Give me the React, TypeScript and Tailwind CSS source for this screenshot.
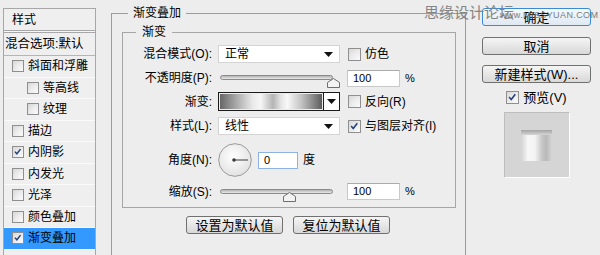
import React from 'react';

const leftItems = [
  { label: '斜面和浮雕', indent: false, checked: false },
  { label: '等高线', indent: true, checked: false },
  { label: '纹理', indent: true, checked: false },
  { label: '描边', indent: false, checked: false },
  { label: '内阴影', indent: false, checked: true },
  { label: '内发光', indent: false, checked: false },
  { label: '光泽', indent: false, checked: false },
  { label: '颜色叠加', indent: false, checked: false },
  { label: '渐变叠加', indent: false, checked: true, selected: true },
];

function Check({ checked, size = 13 }: { checked?: boolean; size?: number }) {
  return (
    <span
      className="relative inline-block shrink-0 border border-[#8f8f8f] bg-gradient-to-br from-[#d8d8d8] to-[#fbfbfb]"
      style={{ width: size, height: size }}
    >
      <span className="absolute inset-[2px] bg-gradient-to-br from-[#e2e2e2] to-[#f7f7f7]" />
      {checked && (
        <svg className="absolute inset-0" viewBox="0 0 13 13" width={size - 2} height={size - 2}>
          <path d="M2.5 6 L5 8.8 L9.8 2.8" fill="none" stroke="#22407e" strokeWidth="1.9" />
        </svg>
      )}
    </span>
  );
}

function Arrow() {
  return (
    <svg width="9" height="5" viewBox="0 0 9 5">
      <path d="M0 0 H9 L4.5 5 Z" fill="#111" />
    </svg>
  );
}

function Select({ value }: { value: string }) {
  return (
    <div className="flex h-[18px] w-[122px] items-center justify-between border border-[#d4d4d4] bg-white pl-[6px] pr-[6px]">
      <span className="text-[12px] leading-none">{value}</span>
      <Arrow />
    </div>
  );
}

function Slider({ pos }: { pos: number }) {
  return (
    <div className="relative h-[18px] w-[122px]">
      <div className="absolute left-[2px] top-[6px] h-[5px] w-[113px] rounded-full border border-[#8a8a8a] bg-gradient-to-b from-[#b4b4b4] to-[#e8e8e8]" />
      <svg className="absolute top-[9px]" style={{ left: pos - 6 }} width="13" height="10" viewBox="0 0 13 10">
        <path d="M0.5 9.5 V4.5 L6.5 0.5 L12.5 4.5 V9.5 Z" fill="#f3f3f3" stroke="#6e6e6e" />
      </svg>
    </div>
  );
}

function NumInput({ value, w, focus }: { value: string; w: string; focus?: boolean }) {
  return (
    <div
      className={`flex h-[17px] items-center bg-white pl-[5px] text-[11px] leading-none ${w} ${
        focus ? 'border border-[#8db2e3]' : 'border border-[#c9c9c9] border-t-[#ababab]'
      }`}
    >
      {value}
    </div>
  );
}

function Btn({ children, w, primary }: { children: React.ReactNode; w: string; primary?: boolean }) {
  return (
    <div
      className={`flex h-[18px] items-center justify-center rounded-[3px] border text-[13px] leading-none ${w} ${
        primary
          ? 'border-[#3d8ad0] bg-gradient-to-b from-[#f4f9fd] to-[#dfe9f2]'
          : 'border-[#707070] bg-gradient-to-b from-[#f5f5f5] to-[#d8d8d8]'
      }`}
    >
      {children}
    </div>
  );
}

function Row({ label, children, h, mt }: { label: string; children: React.ReactNode; h: string; mt: string }) {
  return (
    <div className={`flex items-center ${h} ${mt}`}>
      <span className="w-[89px] shrink-0 text-right text-[12px] leading-none">{label}</span>
      <div className="ml-[6px] flex items-center">{children}</div>
    </div>
  );
}

export default function App() {
  return (
    <div className="relative flex h-[255px] w-[600px] items-start overflow-hidden bg-[#ededed] font-['Liberation_Sans','Noto_Sans_CJK_SC',sans-serif] text-black">
      {/* style list */}
      <div className="ml-[3px] mt-[8px] h-[260px] w-[93px] shrink-0 border-x border-t border-[#a7a7a7] bg-[#efefef] text-[12px]">
        <div className="flex h-[21px] items-center pl-[8px] leading-none">样式</div>
        <div className="h-[3px] border-y border-[#a7a7a7] bg-[#f6f6f6]" />
        <div className="flex h-[23px] items-center border-b border-[#b5b5b5] pl-[1px] text-[12.5px] leading-none">
          混合选项:默认
        </div>
        {leftItems.map((it) => (
          <div
            key={it.label}
            className={`flex h-[21.5px] items-center border-b border-[#fafafa] leading-none ${
              it.selected ? 'bg-[#3399ff] text-white' : ''
            } ${it.indent ? 'pl-[23px]' : 'pl-[8px]'}`}
          >
            <Check checked={it.checked} size={12} />
            <span className={`ml-[4px] ${it.selected ? 'text-black' : ''}`}>{it.label}</span>
          </div>
        ))}
      </div>

      {/* gradient overlay panel */}
      <fieldset className="ml-[15px] mt-[4px] h-[290px] w-[355px] shrink-0 border border-[#9c9c9c] pl-[10px] pr-[9px]">
        <legend className="ml-[6px] px-[5px] text-[12px] leading-[18px]">渐变叠加</legend>
        <fieldset className="mt-[1px] h-[185px] w-[334px] border border-[#a6a6a6]">
          <legend className="ml-[13px] px-[6px] text-[12px] leading-[18px]">渐变</legend>

          <Row label="混合模式(O):" h="h-[18px]" mt="mt-[4px]">
            <Select value="正常" />
            <span className="ml-[8px] flex items-center">
              <Check />
              <span className="ml-[4px] text-[12px] leading-none">仿色</span>
            </span>
          </Row>

          <Row label="不透明度(P):" h="h-[18px]" mt="mt-[6px]">
            <Slider pos={115} />
            <span className="ml-[7px]">
              <NumInput value="100" w="w-[53px]" />
            </span>
            <span className="ml-[5px] text-[11px] leading-none">%</span>
          </Row>

          <Row label="渐变:" h="h-[19px]" mt="mt-[5px]">
            <div className="flex h-[19px] w-[122px] border border-[#1a1a1a]">
              <div className="m-[1px] flex-1 bg-[linear-gradient(90deg,#676767,#a9a9a9_16%,#e9e9e9_32%,#f6f6f6_40%,#b4b4b4_52%,#e6e6e6_60%,#f9f9f9_66%,#c2c2c2_80%,#5c5c5c)]" />
              <div className="flex w-[16px] items-center justify-center border-l border-[#1a1a1a] bg-white">
                <Arrow />
              </div>
            </div>
            <span className="ml-[8px] flex items-center">
              <Check />
              <span className="ml-[4px] text-[12px] leading-none">反向(R)</span>
            </span>
          </Row>

          <Row label="样式(L):" h="h-[18px]" mt="mt-[6px]">
            <Select value="线性" />
            <span className="ml-[8px] flex items-center">
              <Check checked />
              <span className="ml-[4px] text-[12px] leading-none">与图层对齐(I)</span>
            </span>
          </Row>

          <Row label="角度(N):" h="h-[34px]" mt="mt-[8px]">
            <svg width="34" height="34" viewBox="0 0 34 34">
              <defs>
                <radialGradient id="dial" cx="45%" cy="40%" r="60%">
                  <stop offset="0%" stopColor="#ffffff" />
                  <stop offset="100%" stopColor="#e2e2e2" />
                </radialGradient>
              </defs>
              <circle cx="17" cy="17" r="16.3" fill="url(#dial)" stroke="#9a9a9a" />
              <line x1="17" y1="17" x2="30" y2="17" stroke="#5a5a5a" strokeWidth="1.2" />
              <circle cx="16" cy="17" r="1.8" fill="#3a3a3a" />
            </svg>
            <span className="ml-[6px]">
              <NumInput value="0" w="w-[40px]" focus />
            </span>
            <span className="ml-[5px] text-[12px] leading-none">度</span>
          </Row>

          <Row label="缩放(S):" h="h-[17px]" mt="mt-[6px]">
            <Slider pos={71} />
            <span className="ml-[7px]">
              <NumInput value="100" w="w-[53px]" />
            </span>
            <span className="ml-[5px] text-[11px] leading-none">%</span>
          </Row>
        </fieldset>

        <div className="ml-[64px] mt-[8px] flex gap-[10px]">
          <Btn w="w-[97px]">设置为默认值</Btn>
          <Btn w="w-[97px]">复位为默认值</Btn>
        </div>
      </fieldset>

      {/* right buttons */}
      <div className="ml-[16px] mt-[8px] flex w-[109px] shrink-0 flex-col items-center">
        <Btn w="w-full" primary>
          确定
        </Btn>
        <div className="mt-[11px] w-full">
          <Btn w="w-full">取消</Btn>
        </div>
        <div className="mt-[10px] w-full">
          <Btn w="w-full">新建样式(W)...</Btn>
        </div>
        <div className="mt-[7px] flex h-[14px] items-center">
          <Check checked />
          <span className="ml-[4px] text-[13px] leading-none">预览(V)</span>
        </div>
        <div className="mt-[8px] flex h-[66px] w-[66px] items-center justify-center border border-[#bdbdbd] border-b-white border-r-white bg-[#d5d5d5]">
          <div className="flex h-[31px] w-[31px] flex-col">
            <div className="h-[5px] bg-gradient-to-b from-[#a4a4a4] to-[#d6d6d6]" />
            <div className="flex-1 bg-[linear-gradient(90deg,#d3d3d3,#f6f6f6_22%,#f3f3f3_45%,#c6c6c6_68%,#b9b9b9_82%,#d6d6d6)]" />
          </div>
        </div>
      </div>

      {/* watermark */}
      <div className="pointer-events-none absolute left-[424px] top-[4px] text-[15px] leading-[18px] text-[#858585]">
        思缘设计论坛
      </div>
      <div className="pointer-events-none absolute left-[500px] top-[10px] text-[9px] leading-[10px] tracking-[0.4px] text-[#7c7c7c]">
        www.MISSYUAN.COM
      </div>
    </div>
  );
}
